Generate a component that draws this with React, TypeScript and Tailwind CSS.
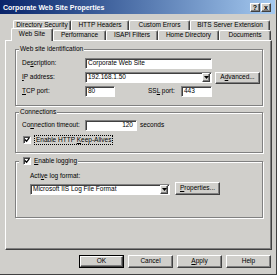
import React from 'react';

const raised =
  'border border-t-white border-l-white border-r-[#404040] border-b-[#404040] shadow-[inset_-1px_-1px_0_#808080]';
const sunken =
  'border border-t-[#808080] border-l-[#808080] border-r-white border-b-white shadow-[inset_1px_1px_0_#404040] bg-white';

const Key = ({ children }: { children: React.ReactNode }) => <span className="underline underline-offset-[1px]">{children}</span>;

const Check = () => (
  <div className={`${sunken} w-[8px] h-[8px] flex items-center justify-center shrink-0`}>
    <svg width="6" height="6" viewBox="0 0 7 7">
      <polyline points="1,3 3,5 6,1" fill="none" stroke="#000" strokeWidth="1.5" />
    </svg>
  </div>
);

const Arrow = () => (
  <div className={`${raised} bg-[#d0cfcb] w-[8px] h-full flex items-center justify-center shrink-0`}>
    <svg width="5" height="3" viewBox="0 0 5 3">
      <polygon points="0,0 5,0 2.5,3" fill="#000" />
    </svg>
  </div>
);

const Button = ({ children, w = 'w-[45px]', h = 'h-[13px]', def = false }: { children: React.ReactNode; w?: string; h?: string; def?: boolean }) => (
  <div className={`${def ? 'border border-black' : ''} ${w} ${h} flex`}>
    <div className={`${raised} bg-[#d0cfcb] flex-1 flex items-center justify-center`}>{children}</div>
  </div>
);

const Group = ({ label, children, pad }: { label: React.ReactNode; children: React.ReactNode; pad: string }) => (
  <div className={`relative border border-[#808080] shadow-[inset_1px_1px_0_white,1px_1px_0_white] ${pad}`}>
    <div className="absolute top-[-6px] left-[3px] px-[1px] bg-[#d0cfcb] flex items-center gap-[3px] h-[10px]">{label}</div>
    {children}
  </div>
);

const BackTab = ({ w, children }: { w: string; children: React.ReactNode }) => (
  <div className={`${w} h-[10px] border-t border-l border-t-white border-l-white border-r border-r-[#404040] shadow-[inset_-1px_0_0_#808080] rounded-t-[2px] flex items-center justify-center`}>
    {children}
  </div>
);

export default function App() {
  return (
    <div className="w-[277px] h-[275px] bg-[#d0cfcb] border-r border-b border-[#404040] flex flex-col font-['Liberation_Sans',Arial,sans-serif] text-[6.5px] text-black leading-none overflow-hidden">
      {/* Title bar */}
      <div className="h-[14px] w-[275px] shrink-0 bg-gradient-to-r from-[#0a246a] to-[#a6caf0] flex items-center pl-[3px] pr-[4px]">
        <span className="text-white font-bold text-[7px] flex-1">Corporate Web Site Properties</span>
        <div className="flex gap-[1px]">
          <div className={`${raised} bg-[#d0cfcb] w-[10px] h-[9px] flex items-center justify-center text-[7px] font-bold`}>?</div>
          <div className={`${raised} bg-[#d0cfcb] w-[10px] h-[9px] flex items-center justify-center text-[7px] font-bold`}>x</div>
        </div>
      </div>

      {/* Tabs */}
      <div className="mt-[6px] pl-[13px] flex">
        <BackTab w="w-[58px]">Directory Security</BackTab>
        <BackTab w="w-[58px]">HTTP Headers</BackTab>
        <BackTab w="w-[61px]">Custom Errors</BackTab>
        <BackTab w="w-[80px]">BITS Server Extension</BackTab>
      </div>
      <div className="pl-[11px] flex items-end h-[10px]">
        <div className="relative top-[1px] z-10 w-[42px] h-[13px] bg-[#d0cfcb] border-t border-l border-t-white border-l-white border-r border-r-[#404040] shadow-[inset_-1px_0_0_#808080] rounded-t-[2px] flex items-center justify-center pb-[2px]">
          Web Site
        </div>
        <BackTab w="w-[53px]">Performance</BackTab>
        <BackTab w="w-[52px]">ISAPI Filters</BackTab>
        <BackTab w="w-[61px]">Home Directory</BackTab>
        <BackTab w="w-[52px]">Documents</BackTab>
      </div>

      {/* Panel */}
      <div className="ml-[5px] w-[267px] h-[210px] shrink-0 border border-t-white border-l-white border-r-[#404040] border-b-[#404040] shadow-[inset_-1px_-1px_0_#808080] pt-[8px] pl-[9px] pr-[8px] flex flex-col">
        <Group label={<span>Web site identification</span>} pad="pt-[8px] pl-[6px] pb-[8px]">
          <div className="flex flex-col gap-[3px]">
            <div className="flex items-center h-[11px]">
              <span className="w-[63px]">De<Key>s</Key>cription:</span>
              <div className={`${sunken} w-[127px] h-[11px] flex items-center pl-[2px]`}>Corporate Web Site</div>
            </div>
            <div className="flex items-center h-[11px]">
              <span className="w-[63px]"><Key>I</Key>P address:</span>
              <div className={`${sunken} w-[127px] h-[11px] flex items-center pl-[2px] pr-[1px]`}>
                <span className="flex-1">192.168.1.50</span>
                <div className="h-[9px] flex"><Arrow /></div>
              </div>
              <div className="ml-[3px]">
                <Button w="w-[45px]" h="h-[12px]">A<Key>d</Key>vanced...</Button>
              </div>
            </div>
            <div className="flex items-center h-[11px]">
              <span className="w-[63px]"><Key>T</Key>CP port:</span>
              <div className={`${sunken} w-[30px] h-[11px] flex items-center pl-[2px]`}>80</div>
              <span className="ml-[33px] w-[33px]">SS<Key>L</Key> port:</span>
              <div className={`${sunken} w-[31px] h-[11px] flex items-center pl-[2px]`}>443</div>
            </div>
          </div>
        </Group>

        <div className="mt-[6px]">
          <Group label={<span>Connections</span>} pad="pt-[7px] pl-[6px] pb-[8px]">
            <div className="flex items-center h-[11px]">
              <span className="w-[63px]">Co<Key>n</Key>nection timeout:</span>
              <div className={`${sunken} w-[52px] h-[11px] flex items-center justify-end pr-[3px]`}>120</div>
              <span className="ml-[3px]">seconds</span>
            </div>
            <div className="mt-[5px] flex items-center h-[8px] pl-[1px] gap-[3px]">
              <Check />
              <span className="border border-dotted border-black px-[1px] py-[1px]">Enable HTTP <Key>K</Key>eep-Alives</span>
            </div>
          </Group>
        </div>

        <div className="mt-[8px]">
          <Group
            label={
              <>
                <span className="pl-[3px]"><Check /></span>
                <span><Key>E</Key>nable logging</span>
              </>
            }
            pad="pt-[10px] pl-[14px] pb-[22px]"
          >
            <div className="h-[8px] flex items-center">Acti<Key>v</Key>e log format:</div>
            <div className="mt-[2px] flex items-end">
              <div className={`${sunken} w-[140px] h-[11px] flex items-center pl-[2px] pr-[1px]`}>
                <span className="flex-1">Microsoft IIS Log File Format</span>
                <div className="h-[9px] flex"><Arrow /></div>
              </div>
              <div className="ml-[5px]">
                <Button w="w-[45px]" h="h-[13px]"><Key>P</Key>roperties...</Button>
              </div>
            </div>
          </Group>
        </div>
      </div>

      {/* Bottom buttons */}
      <div className="mt-[5px] pr-[5px] flex justify-end gap-[4px]">
        <Button def>OK</Button>
        <Button>Cancel</Button>
        <Button><Key>A</Key>pply</Button>
        <Button>Help</Button>
      </div>
    </div>
  );
}
